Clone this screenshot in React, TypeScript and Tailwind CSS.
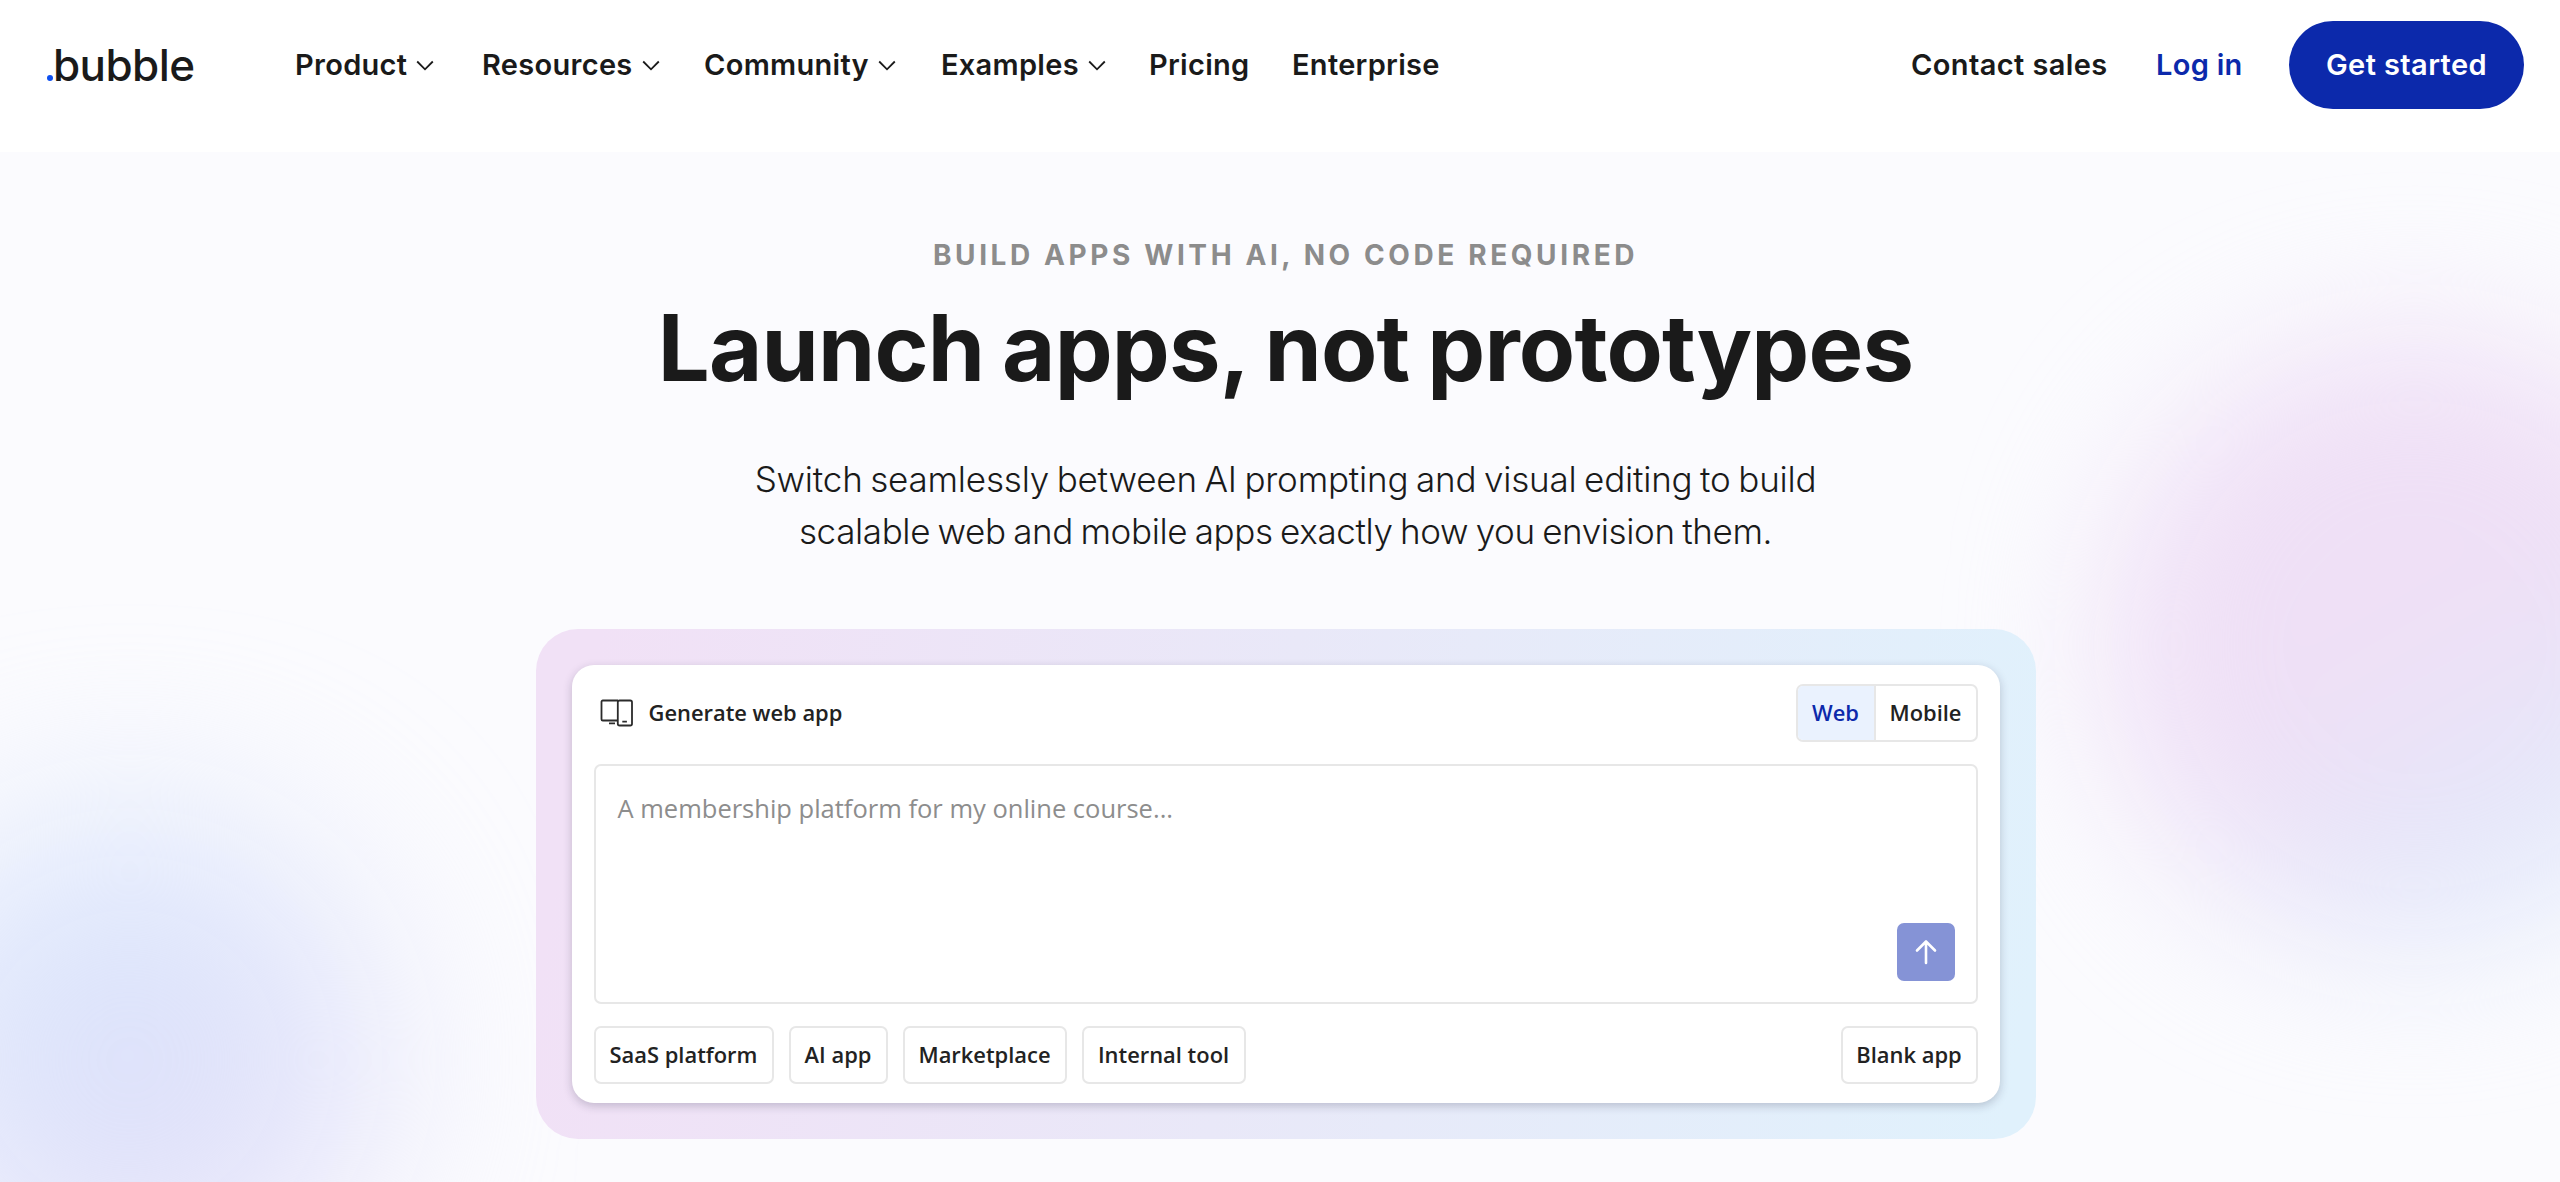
import type { ReactNode } from 'react'
import { clsx } from 'clsx'

interface NavItem {
  label: string
  width: string
  hasMenu?: boolean
}

const NAV_ITEMS: NavItem[] = [
  { label: 'Product', width: 'w-[187px]', hasMenu: true },
  { label: 'Resources', width: 'w-[222px]', hasMenu: true },
  { label: 'Community', width: 'w-[237px]', hasMenu: true },
  { label: 'Examples', width: 'w-[208px]', hasMenu: true },
  { label: 'Pricing', width: 'w-[143px]' },
  { label: 'Enterprise', width: 'w-[160px]' },
]

const TEMPLATES = [
  { label: 'SaaS platform', width: 'w-[180px]' },
  { label: 'AI app', width: 'w-[99px]' },
  { label: 'Marketplace', width: 'w-[164px]' },
  { label: 'Internal tool', width: 'w-[164px]' },
]

function ChevronIcon() {
  return (
    <svg width="18" height="11" viewBox="0 0 18 11" fill="none" className="shrink-0">
      <path d="M1.2 1.5 9 9.3l7.8-7.8" stroke="#1a1a1a" strokeWidth="1.8" />
    </svg>
  )
}

function DevicesIcon() {
  return (
    <svg width="34" height="28" viewBox="0 0 34 28" fill="none" stroke="#2b2b2b" strokeWidth="1.8">
      <path d="M17 21.5H2.8A1.3 1.3 0 0 1 1.5 20.2V2.8A1.3 1.3 0 0 1 2.8 1.5H18" />
      <rect x="17.8" y="1.5" width="14.2" height="25" rx="1.8" />
      <path d="M9 24.3h6M22.3 22.6h4.6" />
    </svg>
  )
}

function ArrowUpIcon() {
  return (
    <svg width="22" height="26" viewBox="0 0 22 26" fill="none" stroke="#fff" strokeWidth="2.6">
      <path d="M11 24V3M2 11.5l9-9 9 9" strokeLinecap="round" strokeLinejoin="round" />
    </svg>
  )
}

function Header() {
  return (
    <header className="flex h-[152px] items-start bg-white pt-[21px]">
      <div className="flex h-[88px] w-full items-center pr-9 pl-[47px] text-[29px] font-semibold tracking-[0.3px]">
        <a className="flex w-[248px] items-center text-[44px] leading-[56px] font-medium tracking-[-0.6px]">
          <span className="mt-[26px] size-1.5 rounded-full bg-[#0d4ff0]" />
          <span>bubble</span>
        </a>
        <nav className="flex items-center">
          {NAV_ITEMS.map((item) => (
            <a key={item.label} className={clsx('flex items-center gap-[9px]', item.width)}>
              {item.label}
              {item.hasMenu && <ChevronIcon />}
            </a>
          ))}
        </nav>
        <div className="ml-auto flex items-center">
          <a className="w-[245px] tracking-[0.4px]">Contact sales</a>
          <a className="w-[133px] text-[#0c29ab]">Log in</a>
          <a className="flex h-[88px] w-[235px] items-center justify-center rounded-full bg-[#0c29ab] tracking-[0.4px] text-white">
            Get started
          </a>
        </div>
      </div>
    </header>
  )
}

function ChipButton({ className, children }: { className?: string; children: ReactNode }) {
  return (
    <button
      className={clsx(
        'flex h-[58px] items-center justify-center rounded-[7px] border-2 border-[#e7e7e7] bg-white',
        className
      )}
    >
      {children}
    </button>
  )
}

function PromptCard() {
  return (
    <div className="mt-[72px] h-[510px] w-[1500px] rounded-[42px] bg-[linear-gradient(100deg,#f1e1f6_4%,#e9e8f8_48%,#e0f1fc_98%)] p-9 text-left">
      <div className="flex h-[438px] flex-col gap-[22px] rounded-[22px] bg-white px-[22px] py-[19px] font-['Open_Sans',sans-serif] text-[21.9px] font-semibold text-[#222] shadow-[0_3px_10px_rgba(30,30,60,0.22)]">
        <div className="flex h-[58px] items-center justify-between">
          <div className="flex items-center gap-[15px] pl-[6px]">
            <DevicesIcon />
            <span>Generate web app</span>
          </div>
          <div className="flex h-[58px] w-[182px] overflow-hidden rounded-[7px] border-2 border-[#e7e7e7]">
            <button className="flex w-[78px] items-center justify-center border-r-2 border-[#e7e7e7] bg-[#eaf2fe] text-[#0c29ab]">
              Web
            </button>
            <button className="flex flex-1 items-center justify-center">Mobile</button>
          </div>
        </div>

        <div className="flex h-[240px] flex-col justify-between rounded-[7px] border-2 border-[#e7e7e7] pt-[24px] pr-[21px] pb-[21px] pl-[22px]">
          <p className="text-[25.5px] leading-9 font-normal text-[#8d8d8d]">
            A membership platform for my online course...
          </p>
          <button className="flex size-[58px] items-center justify-center self-end rounded-[7px] bg-[#8593d6]">
            <ArrowUpIcon />
          </button>
        </div>

        <div className="flex gap-[15px]">
          {TEMPLATES.map((template) => (
            <ChipButton key={template.label} className={template.width}>
              {template.label}
            </ChipButton>
          ))}
          <ChipButton className="ml-auto w-[137px]">Blank app</ChipButton>
        </div>
      </div>
    </div>
  )
}

function Hero() {
  return (
    <main className="relative h-[1030px] overflow-hidden bg-[#fbfbfe]">
      {/* soft colour blobs behind the content */}
      <div className="absolute top-[183px] left-[2105px] size-[620px] rounded-full bg-[linear-gradient(150deg,#efe0f6_50%,#e6e6f9_70%,#e4f0fd_92%)] blur-[70px]" />
      <div className="absolute top-[663px] -left-[115px] size-[490px] rounded-full bg-[linear-gradient(150deg,#dbe6fc_20%,#e2e0f9_80%)] blur-[92px]" />

      <div className="relative flex flex-col items-center pt-[85px] pl-[11px] text-center">
        <p className="text-[28px] leading-9 font-bold tracking-[3.6px] text-[#8c8c8c]">
          BUILD APPS WITH AI, NO CODE REQUIRED
        </p>
        <h1 className="mt-[19px] text-[92px] leading-[112px] font-bold tracking-[-0.85px] [word-spacing:-3px]">
          Launch apps, not prototypes
        </h1>
        <p className="mt-[49px] text-[35px] leading-[52px] font-light [word-spacing:-2px]">
          <span className="block tracking-[-0.2px]">
            Switch seamlessly between AI prompting and visual editing to build
          </span>
          <span className="block tracking-[-0.37px]">
            scalable web and mobile apps exactly how you envision them.
          </span>
        </p>
        <PromptCard />
      </div>
    </main>
  )
}

export default function App() {
  return (
    <div className="h-[1182px] overflow-hidden bg-white font-[Inter,sans-serif] text-[#1a1a1a]">
      <Header />
      <Hero />
    </div>
  )
}
